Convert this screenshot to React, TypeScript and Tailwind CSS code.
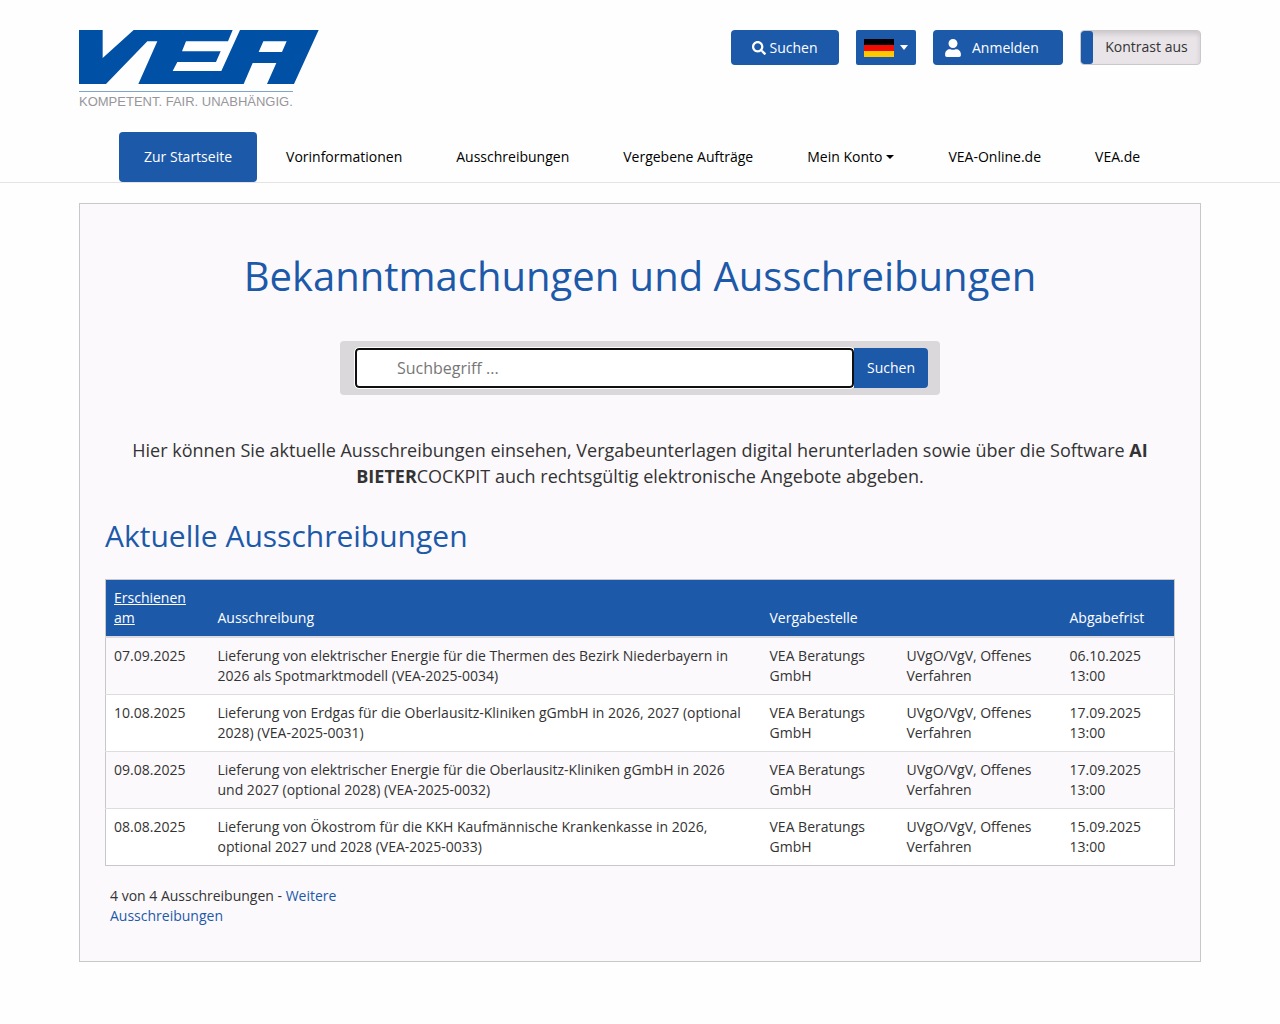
import { useState } from "react";
import { FaSearch, FaUser } from "react-icons/fa";

const navItems = [
  { label: "Zur Startseite", active: true },
  { label: "Vorinformationen" },
  { label: "Ausschreibungen" },
  { label: "Vergebene Aufträge" },
  { label: "Mein Konto", dropdown: true },
  { label: "VEA-Online.de" },
  { label: "VEA.de" },
];

const tenders = [
  {
    date: "07.09.2025",
    title: "Lieferung von elektrischer Energie für die Thermen des Bezirk Niederbayern in 2026 als Spotmarktmodell (VEA-2025-0034)",
    deadline: "06.10.2025 13:00",
  },
  {
    date: "10.08.2025",
    title: "Lieferung von Erdgas für die Oberlausitz-Kliniken gGmbH in 2026, 2027 (optional 2028) (VEA-2025-0031)",
    deadline: "17.09.2025 13:00",
  },
  {
    date: "09.08.2025",
    title: "Lieferung von elektrischer Energie für die Oberlausitz-Kliniken gGmbH in 2026 und 2027 (optional 2028) (VEA-2025-0032)",
    deadline: "17.09.2025 13:00",
  },
  {
    date: "08.08.2025",
    title: "Lieferung von Ökostrom für die KKH Kaufmännische Krankenkasse in 2026, optional 2027 und 2028 (VEA-2025-0033)",
    deadline: "15.09.2025 13:00",
  },
];

function Logo() {
  return (
    <a href="#" aria-label="VEA Startseite" className="block w-60">
      <svg viewBox="27 30 720 162" className="block h-[54px] w-60">
        <path fill="#0050a5" d="M27 30H98V114L191 30H746L672 192H591L619 129H548L521 192H205L262 64H232L108 192H27Z" />
        <path fill="#fefefe" d="M488 30H510L454 153H308L322 126H438L452 94H336L348 64H474ZM580 64H650L636 96H566Z" />
      </svg>
      <div className="mt-[7px] w-[214px] border-t border-[#7fa5cf] pt-1 font-['Liberation_Sans',sans-serif] text-[13px] leading-3 whitespace-nowrap text-[#97979b]">
        KOMPETENT. FAIR. UNABHÄNGIG.
      </div>
    </a>
  );
}

function GermanFlag() {
  return (
    <svg viewBox="0 0 30 18" className="h-[18px] w-[30px]">
      <rect width="30" height="6" fill="#000" />
      <rect y="6" width="30" height="6" fill="#f10b00" />
      <rect y="12" width="30" height="6" fill="#ffc800" />
    </svg>
  );
}

export default function App() {
  const [contrast, setContrast] = useState(false);
  const [term, setTerm] = useState("");

  return (
    <div className="min-h-screen bg-[#fefefe] pb-10 font-['Open_Sans','Noto_Sans',sans-serif] text-sm leading-5 text-[#333]">
      <header className="border-b border-[#e4e4e6]">
        <div className="mx-auto max-w-[1122px] pt-[30px]">
          <div className="flex h-[102px] items-start justify-between">
            <Logo />
            <div className="flex gap-[17px]">
              <button className="flex h-[35px] w-[108px] items-center justify-center gap-[3px] rounded bg-[#1d59a9] text-white">
                <FaSearch size={14} /> Suchen
              </button>
              <button aria-label="Sprache wählen" className="flex h-[35px] w-15 items-center gap-1.5 rounded-xs bg-[#1d59a9] pl-2">
                <GermanFlag />
                <span className="border-x-4 border-t-5 border-x-transparent border-t-white" />
              </button>
              <button className="flex h-[35px] w-[130px] items-center gap-[11px] rounded bg-[#1d59a9] pl-3 text-white">
                <FaUser size={16} className="h-[18px]" /> Anmelden
              </button>
              <button
                role="switch"
                aria-checked={contrast}
                onClick={() => setContrast(!contrast)}
                className="flex h-[35px] w-[121px] overflow-hidden rounded border border-[#cbc8cc] bg-[#e9e4e8] shadow-[inset_0_3px_5px_rgba(0,0,0,0.125)]"
              >
                <span className="h-full w-3 rounded-[3px] bg-[#1d59a9]" />
                <span className="flex-1 pt-1.5 text-center">Kontrast {contrast ? "an" : "aus"}</span>
              </button>
            </div>
          </div>

          <nav className="flex gap-1 px-10">
            {navItems.map((item) => (
              <a
                key={item.label}
                href="#"
                className={`flex h-[50px] items-center rounded px-[25px] whitespace-nowrap ${item.active ? "bg-[#1d59a9] text-white" : "text-black"}`}
              >
                {item.label}
                {item.dropdown && <span className="ml-1 border-x-4 border-t-4 border-x-transparent border-t-black" />}
              </a>
            ))}
          </nav>
        </div>
      </header>

      <main className="mx-auto mt-5 max-w-[1122px] border border-[#c8c8ca] bg-[#fbf9fc] px-[25px] pt-12 pb-[35px]">
        <h1 className="text-center text-[40px] leading-12 text-[#1d59a9]">Bekanntmachungen und Ausschreibungen</h1>

        <form
          onSubmit={(e) => e.preventDefault()}
          className="mx-auto mt-[41px] flex h-[54px] max-w-[600px] items-center rounded bg-[#dad8db] pr-3 pl-[15px]"
        >
          <input
            type="text"
            aria-label="Suchbegriff"
            placeholder="Suchbegriff ..."
            value={term}
            onChange={(e) => setTerm(e.target.value)}
            className="h-10 min-w-0 flex-1 rounded border-2 border-[#101010] bg-white px-10 text-base outline outline-white placeholder:text-[#777]"
          />
          <button className="h-10 w-[74px] rounded-r bg-[#1d59a9] text-white">Suchen</button>
        </form>

        <p className="mt-[42px] text-center text-lg leading-[26px]">
          Hier können Sie aktuelle Ausschreibungen einsehen, Vergabeunterlagen digital herunterladen sowie über die Software{" "}
          <b>AI BIETER</b>COCKPIT auch rechtsgültig elektronische Angebote abgeben.
        </p>

        <h2 className="mt-[29px] text-3xl leading-9 text-[#1d59a9]">Aktuelle Ausschreibungen</h2>

        <table className="mt-[25px] w-full table-fixed border-collapse border border-[#c8c8ca] text-left">
          <colgroup>
            <col className="w-[104px]" />
            <col />
            <col className="w-[137px]" />
            <col className="w-[163px]" />
            <col className="w-[113px]" />
          </colgroup>
          <thead className="border-b-2 border-[#dddbdf] bg-[#1d59a9] align-bottom text-white">
            <tr>
              <th className="p-2 font-normal">
                <a href="#" className="block w-20 underline">Erschienen am</a>
              </th>
              <th className="p-2 font-normal">Ausschreibung</th>
              <th className="p-2 font-normal">Vergabestelle</th>
              <th className="p-2"></th>
              <th className="p-2 font-normal">Abgabefrist</th>
            </tr>
          </thead>
          <tbody>
            {tenders.map((t) => (
              <tr key={t.date} className="border-t border-[#dddddf] align-top odd:bg-[#fbf9fc] even:bg-white">
                <td className="p-2">{t.date}</td>
                <td className="p-2">{t.title}</td>
                <td className="p-2">VEA Beratungs GmbH</td>
                <td className="p-2">UVgO/VgV, Offenes Verfahren</td>
                <td className="p-2">{t.deadline}</td>
              </tr>
            ))}
          </tbody>
        </table>

        <p className="mt-5 ml-[5px] max-w-[260px]">
          4 von 4 Ausschreibungen - <a href="#" className="text-[#1d59a9]">Weitere Ausschreibungen</a>
        </p>
      </main>
    </div>
  );
}
